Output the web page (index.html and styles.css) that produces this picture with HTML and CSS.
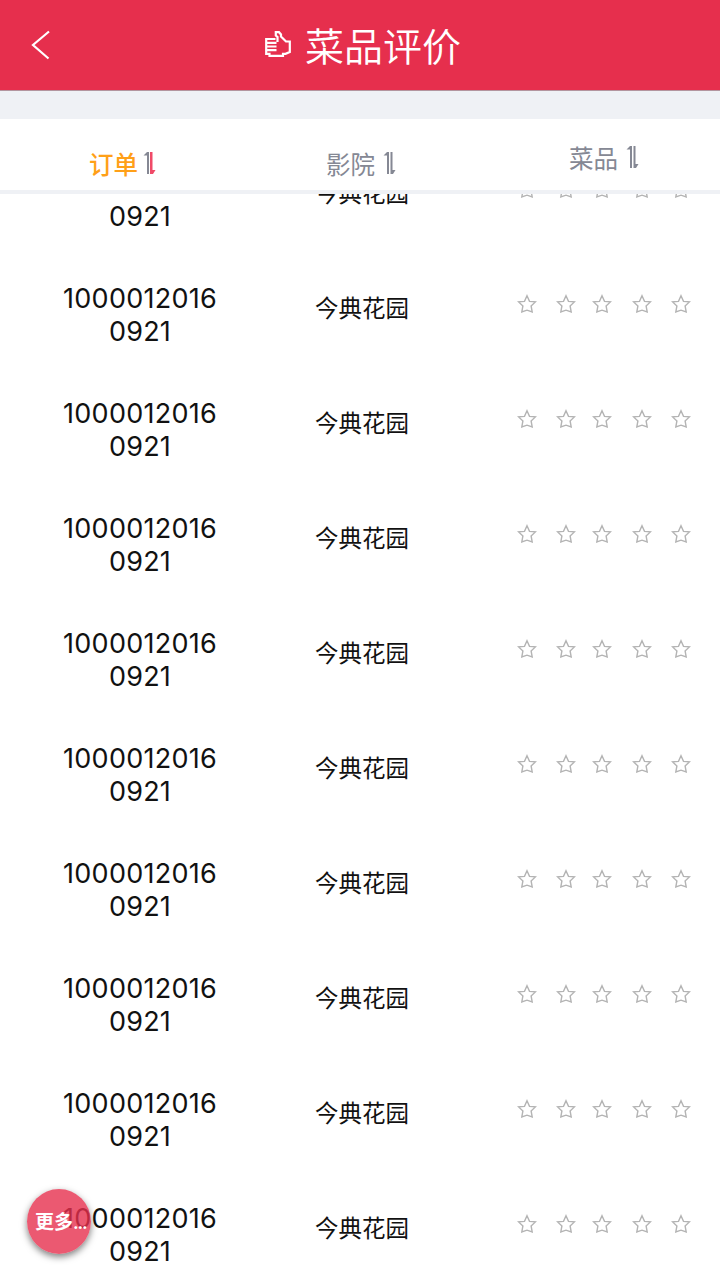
FILE: index.html
```
<!DOCTYPE html>
<html lang="zh-CN">
    <head>
        <meta charset="utf-8">
        <title>菜品评价</title>
        <link rel="stylesheet" href="styles.css">
    </head>
    <body>
        <svg class="sprite">
            <symbol id="star" viewBox="0 0 20 20">
                <path d="M10 1.8 L12.5 7.4 L18.4 7.9 L14.1 11.9 L15.2 18 L10 16.2 L4.8 18 L5.9 11.9 L1.6 7.9 L7.5 7.4 Z"/>
            </symbol>
        </svg>
        <div class="header">
            <svg class="back" viewBox="0 0 20 30">
                <path d="M18 1.5 L2 15 L17.5 28.5"/>
            </svg>
            <svg class="thumb" viewBox="0 0 26 26">
                <path d="M10.5 8 H1.2 V22.8 H4.5 V24.8 H18 V22.8 H20.5 L24.8 21 V10.5 H21 L18.5 8 L16 5.5 V3.5 L14 1.2 H10.8 V4.5 L12.5 6 V11 M1.2 11.8 H11.5 M1.2 15.5 H11.5 M1.2 19.2 H11.5"/>
            </svg>
            <span class="title">菜品评价</span>
        </div>
        <div class="tabs">
            <div class="tab active"><span>订单</span>
                <svg class="sort" viewBox="0 0 14 24">
                    <path class="up" d="M0.5 4.5 L4 1 H6 V23 H4 V4.5 Z"/>
                    <path class="down" d="M7 1 H9.5 V19 H12.5 L10 23 H7 Z"/>
                </svg>
            </div>
            <div class="tab"><span>影院</span>
                <svg class="sort" viewBox="0 0 14 24">
                    <path class="up" d="M0.5 4.5 L4 1 H6 V23 H4 V4.5 Z"/>
                    <path class="down" d="M7.5 1 H9.5 V19 H12.5 L10 23 H7.5 Z"/>
                </svg>
            </div>
            <div class="tab dish"><span>菜品</span>
                <svg class="sort" viewBox="0 0 14 24">
                    <path class="up" d="M0.5 4.5 L4 1 H6 V23 H4 V4.5 Z"/>
                    <path class="down" d="M7.5 1 H9.5 V19 H12.5 L10 23 H7.5 Z"/>
                </svg>
            </div>
        </div>
        <div class="list">
            <div class="rows" id="rows"></div>
        </div>
        <div class="more">更多<span class="dots">...</span></div>
    <script src="script.js"></script>
    </body>
</html>
```
FILE: styles.css
```
body {
    margin: 0;
    width: 720px;
    height: 1280px;
    overflow: hidden;
    display: flex;
    flex-direction: column;
    background: #fff;
    color: #111;
    font-family: Inter, "Noto Sans CJK SC", sans-serif;
}

.sprite {
    display: none;
}

/* header */
.header {
    display: flex;
    align-items: center;
    flex: none;
    height: 90px;
    background: #e62f4d;
    border-bottom: 1px solid #b3959f;
    color: #fff;
}

.header svg {
    fill: none;
    stroke: #fff;
}

.back {
    width: 20px;
    height: 30px;
    margin-left: 31px;
    stroke-width: 2.2;
}

.thumb {
    width: 26px;
    height: 26px;
    margin: -3px 0 0 214px;
    stroke-width: 2.2;
}

.title {
    margin-left: 14px;
    padding-top: 4px;
    font-size: 39px;
    font-weight: 350;
    line-height: 60px;
}

/* sort tabs */
.tabs {
    display: flex;
    flex: none;
    height: 71px;
    border-top: 28px solid #eff1f5;
    border-bottom: 4px solid #eff1f5;
    font-size: 24.5px;
    line-height: 36px;
    color: #858894;
}

.tab {
    display: flex;
    align-items: center;
    height: 36px;
    width: 237px;
    margin-top: 26px;
    padding-left: 89px;
    box-sizing: border-box;
    font-weight: 400;
}

.tab span {
    padding-top: 4px;
}

.tab.dish {
    margin-top: 20px;
    padding-left: 95px;
}

.sort {
    width: 14px;
    height: 24px;
    margin-left: 8px;
    fill: #858894;
}

.active {
    color: #ffa018;
    font-weight: 500;
}

.active .sort {
    margin-left: 5px;
}

.active .down {
    fill: #f04a68;
}

/* order list, already scrolled half a row */
.list {
    flex: 1;
    overflow: hidden;
}

.rows {
    margin-top: -60px;
}

.row {
    display: flex;
    height: 115px;
}

.order {
    width: 160px;
    padding: 33px 0 0 60px;
    font-size: 27px;
    line-height: 33px;
    letter-spacing: 0.25px;
    text-align: center;
}

.cinema {
    width: 234px;
    padding: 42px 0 0 95px;
    box-sizing: border-box;
    font-size: 23.5px;
    line-height: 36px;
}

.stars {
    display: flex;
    padding: 45px 0 0 63px;
}

.stars svg {
    width: 20px;
    height: 20px;
    margin-right: 19px;
    fill: none;
    stroke: #b4b4b4;
    stroke-width: 1.4;
}

.stars svg:nth-child(2) {
    margin-right: 16px;
}

.stars svg:nth-child(3) {
    margin-right: 20px;
}

/* floating button */
.more {
    position: absolute;
    left: 27px;
    top: 1189px;
    width: 64px;
    height: 65px;
    box-sizing: border-box;
    padding-left: 8px;
    border-radius: 50%;
    background: rgba(230, 47, 77, 0.8);
    box-shadow: 0 3px 7px rgba(0, 0, 0, 0.5);
    color: #fff;
    font-size: 19px;
    font-weight: 700;
    line-height: 67px;
    white-space: nowrap;
}

.dots {
    font-size: 17px;
    letter-spacing: -1.2px;
}
```
FILE: script.js
```
let rows = document.getElementById('rows')
let star = '<svg><use href="#star"/></svg>'
for(let i=0;i<10;i++){
    let row = document.createElement('div')
    row.className = "row"
    row.innerHTML = '<div class="order">1000012016<br>0921</div>'
        + '<div class="cinema">今典花园</div>'
        + '<div class="stars">' + star.repeat(5) + '</div>'
    rows.appendChild(row)
}
```
